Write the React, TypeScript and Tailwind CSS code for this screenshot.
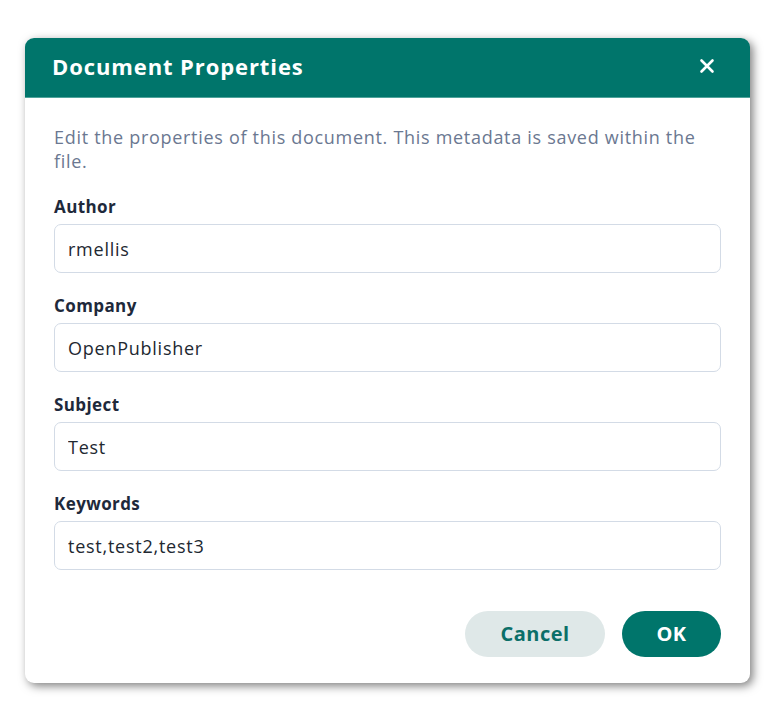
import React, { useState } from 'react';

const fields = [
  { id: 'author', label: 'Author', value: 'rmellis' },
  { id: 'company', label: 'Company', value: 'OpenPublisher' },
  { id: 'subject', label: 'Subject', value: 'Test' },
  { id: 'keywords', label: 'Keywords', value: 'test,test2,test3' },
];

export default function App() {
  const [values, setValues] = useState<Record<string, string>>(
    Object.fromEntries(fields.map((f) => [f.id, f.value]))
  );

  return (
    <div
      className="w-[778px] h-[709px] bg-white pt-[38px] pl-[25px]"
      style={{ fontFamily: '"Open Sans", "Noto Sans", sans-serif' }}
    >
      <div className="w-[725px] h-[645px] rounded-[9px] bg-white overflow-hidden flex flex-col shadow-[3px_3px_10px_rgba(0,0,0,0.5)]">
        {/* header */}
        <div className="h-[60px] bg-[#00756b] flex items-center justify-between pl-[27px] pr-[33px] pb-[3px] border-b border-[#4fa39b]">
          <h2 className="text-[22px] tracking-[0.9px] font-bold text-white leading-none">Document Properties</h2>
          <button className="text-white p-0.5" aria-label="Close">
            <svg width="16" height="16" viewBox="0 0 16 16" fill="none">
              <path d="M2.5 2.5L13.5 13.5M13.5 2.5L2.5 13.5" stroke="currentColor" strokeWidth="2.6" strokeLinecap="round" />
            </svg>
          </button>
        </div>

        {/* body */}
        <div className="flex-1 flex flex-col px-[29px] pt-[27px] pb-[26px]">
          <p className="text-[18px] tracking-[0.7px] leading-[24px] text-[#6b7891]">
            Edit the properties of this document. This metadata is saved within the file.
          </p>

          <div className="mt-[24px] flex flex-col gap-[23px]">
            {fields.map((f) => (
              <div key={f.id} className="flex flex-col">
                <label htmlFor={f.id} className="text-[17px] tracking-[0.4px] leading-[20px] font-bold text-[#1e293b] mb-[7px]">
                  {f.label}
                </label>
                <input
                  id={f.id}
                  value={values[f.id]}
                  onChange={(e) => setValues({ ...values, [f.id]: e.target.value })}
                  className="h-[49px] w-full rounded-[7px] border border-[#d3dbe6] px-[13px] text-[18px] tracking-[0.75px] text-[#222831] outline-none"
                />
              </div>
            ))}
          </div>

          <div className="mt-auto flex justify-end gap-[17px]">
            <button className="w-[140px] h-[46px] rounded-full bg-[#dfe8e8] text-[#0b6f68] text-[20px] tracking-[0.5px] font-bold">
              Cancel
            </button>
            <button className="w-[99px] h-[46px] rounded-full bg-[#00756b] text-white text-[20px] tracking-[0.5px] font-bold">
              OK
            </button>
          </div>
        </div>
      </div>
    </div>
  );
}
